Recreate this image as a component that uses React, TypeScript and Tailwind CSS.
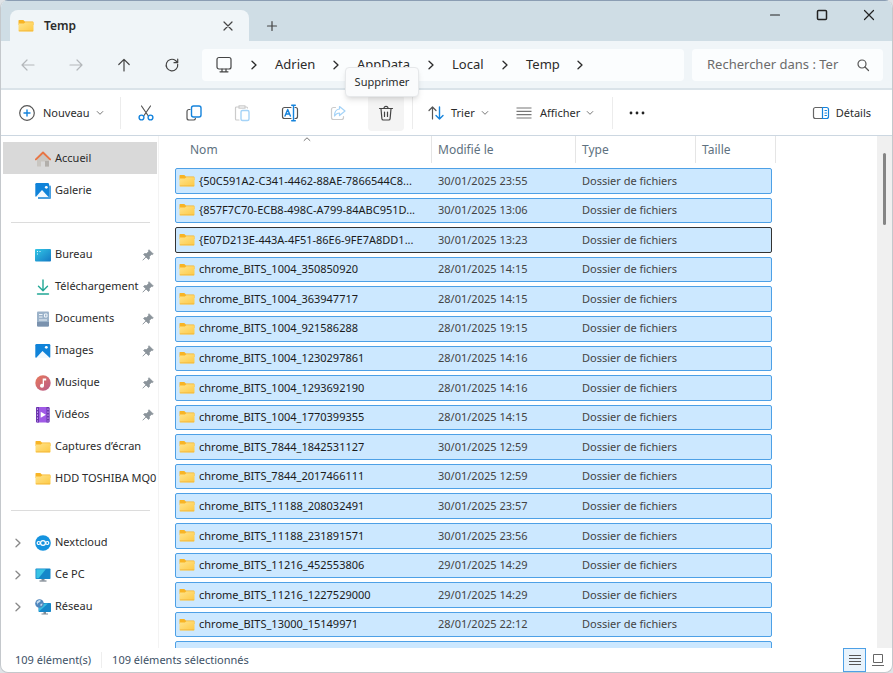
import type { ReactNode } from "react";

type IconProps = { className?: string };

const stroke = { fill: "none", strokeLinecap: "round", strokeLinejoin: "round" } as const;

function FolderIcon({ className = "w-4 h-4" }: IconProps) {
  return (
    <svg viewBox="0 0 16 16" className={`shrink-0 ${className}`} aria-hidden="true">
      <defs>
        <linearGradient id="folder-front" x1="0" y1="0" x2="1" y2="1">
          <stop offset="0" stopColor="#ffe48d" />
          <stop offset="1" stopColor="#fdc944" />
        </linearGradient>
      </defs>
      <path d="M.5 2.6q0-.6.6-.6h4.2l1.6 1.500h7.700q.9 0 .9.9V7H.5z" fill="#f8b425" />
      <path d="M.5 5.400h5.400l1.500-1.200h7.200q.9 0 .9.8v7.500q0 .9-.9.9H1.400q-.9 0-.9-.9z" fill="url(#folder-front)" />
      <path d="M.9 12.800h14.200" stroke="#f3b53a" strokeWidth=".8" />
    </svg>
  );
}

function HomeIcon() {
  return (
    <svg viewBox="0 0 16 16" className="w-4 h-4 shrink-0" aria-hidden="true">
      <path d="M2 7.500 8 2l6 5.500V15q0 .6-.6.6H10v-5H6v5H2.600q-.6 0-.6-.6z" fill="#c9c6c1" />
      <path d="M10 10h4v5q0 .6-.6.6H10z" fill="#b2afab" />
      <path d="M.9 8.400 8 1.500l7.100 6.900" stroke="#e87544" strokeWidth="1.900" {...stroke} />
    </svg>
  );
}

function PictureIcon({ stacked = false }: { stacked?: boolean }) {
  return (
    <svg viewBox="0 0 16 16" className="w-4 h-4 shrink-0" aria-hidden="true">
      {stacked && <path d="M3 2.500h12q1 0 1 1V15q0 1-1 1H3z" fill="#4a9fe0" />}
      <rect x=".3" y={stacked ? 0 : 1} width={stacked ? 13.7 : 15} height="14" rx="1.200" fill="#1083d9" />
      <path d={stacked ? "M.8 14 7 7l6.500 7z" : "M1 15 7.500 8l7.500 7z"} fill="#f2f9ff" />
      <circle cx="11.300" cy="4.300" r="1.400" fill="#fff" />
    </svg>
  );
}

function DesktopIcon() {
  return (
    <svg viewBox="0 0 16 16" className="w-4 h-4 shrink-0" aria-hidden="true">
      <defs>
        <linearGradient id="desktop" x1="0" y1="0" x2="1" y2="1">
          <stop offset="0" stopColor="#32c7e6" />
          <stop offset="1" stopColor="#1479c4" />
        </linearGradient>
      </defs>
      <rect x="0" y="2" width="16" height="12.500" rx="1" fill="url(#desktop)" />
      <path d="M2 4.500h1M2 7h1M4.500 4.500h1" stroke="#e6fbff" />
    </svg>
  );
}

function DownloadIcon() {
  return (
    <svg viewBox="0 0 16 16" className="w-4 h-4 shrink-0" aria-hidden="true">
      <path d="M8 1v10.500M3.500 7.300 8 11.700l4.500-4.400M2.500 15h11" stroke="#21a795" strokeWidth="1.400" {...stroke} />
    </svg>
  );
}

function DocumentIcon() {
  return (
    <svg viewBox="0 0 16 16" className="w-4 h-4 shrink-0" aria-hidden="true">
      <path d="M3 .5h10q1 0 1 1v13q0 1-1 1H3q-1 0-1-1v-13q0-1 1-1z" fill="#9bb2c9" />
      <path d="M2 11h12v3.500q0 1-1 1H3q-1 0-1-1z" fill="#7a92ae" />
      <path d="M4 3.500h3.500M4 6h3.500M4 9h8M9.500 3h2.500v3H9.500z" stroke="#eef4fa" strokeWidth="1" fill="none" />
    </svg>
  );
}

function MusicIcon() {
  return (
    <svg viewBox="0 0 16 16" className="w-4 h-4 shrink-0" aria-hidden="true">
      <defs>
        <linearGradient id="music" x1="0" y1="0" x2="1" y2="1">
          <stop offset="0" stopColor="#e8795a" />
          <stop offset="1" stopColor="#b85b8b" />
        </linearGradient>
      </defs>
      <circle cx="8" cy="8" r="7.700" fill="url(#music)" />
      <path d="M7.700 3.400h3.500v2.200H9v5.200a2 2 0 1 1-1.300-1.900z" fill="#fff" />
    </svg>
  );
}

function VideoIcon() {
  return (
    <svg viewBox="0 0 16 16" className="w-4 h-4 shrink-0" aria-hidden="true">
      <rect x="1" y="0" width="13.500" height="15.500" rx="1.200" fill="#a05ae6" />
      <path d="M1 1.200q0-1.200 1.200-1.200H4v15.500H2.200Q1 15.500 1 14.300zM11.500 0h1.800q1.200 0 1.200 1.200v13.100q0 1.200-1.200 1.200h-1.800z" fill="#6b36ae" />
      <path d="M2.500 1.500v13M13 1.500v13" stroke="#d9bdf8" strokeDasharray="1.300 1.700" />
      <path d="M5.700 4.700v6.100L10.900 7.700z" fill="#fff" />
    </svg>
  );
}

function NextcloudIcon() {
  return (
    <svg viewBox="0 0 16 16" className="w-4 h-4 shrink-0" aria-hidden="true">
      <circle cx="8" cy="8" r="7.800" fill="#1593df" />
      <g fill="none" stroke="#fff" strokeWidth="1.200">
        <circle cx="8" cy="8" r="2.400" />
        <circle cx="3.700" cy="8" r="1.500" />
        <circle cx="12.300" cy="8" r="1.500" />
      </g>
    </svg>
  );
}

function ComputerIcon() {
  return (
    <svg viewBox="0 0 16 16" className="w-4 h-4 shrink-0" aria-hidden="true">
      <rect x=".5" y="1.500" width="15" height="10.500" rx=".8" fill="#1587c9" />
      <path d="M1.300 2.300h9.500L3.500 11.200H1.300z" fill="#39c3e4" />
      <path d="M6.500 12h3v1.500h-3z" fill="#7f8b96" />
      <path d="M4.500 14h7" stroke="#5f6b76" />
    </svg>
  );
}

function NetworkIcon() {
  return (
    <svg viewBox="0 0 16 16" className="w-4 h-4 shrink-0" aria-hidden="true">
      <rect x="3.500" y="4" width="12.500" height="9" rx=".7" fill="#1787c9" />
      <path d="M4 12.500V7l6-2.500h3z" fill="#37bce0" />
      <path d="M8.500 13h2.500v1.500H8.500zM6.500 14.500h6.500v1H6.500z" fill="#7f8b96" />
      <circle cx="4.500" cy="4.500" r="4.300" fill="#4f86bd" />
      <path d="M1.500 3q2-2.500 4-2 .5 2-1.500 2.500T2.500 6zM5.500 5l2-.5-.5 2-1.500.5z" fill="#c4dcef" />
    </svg>
  );
}

function PinIcon() {
  return (
    <svg viewBox="0 0 12 12" className="w-3 h-3 shrink-0" aria-hidden="true">
      <path d="M7 .7 11.300 5l-.9.6-1-.2-2 2 .1 2.100-1 1L3.900 7.900.8 11.200 4.100 8 1.500 5.500l1-1 2.100.1 2-2-.2-1z" fill="#8b949b" stroke="#8b949b" strokeWidth=".7" strokeLinejoin="round" />
    </svg>
  );
}

function ChevronRight({ className = "" }: IconProps) {
  return (
    <svg viewBox="0 0 8 10" className={`w-2 h-2.5 shrink-0 ${className}`} aria-hidden="true">
      <path d="m2 1.200 4 3.800-4 3.800" stroke="currentColor" strokeWidth="1.300" {...stroke} />
    </svg>
  );
}

function ChevronDown() {
  return (
    <svg viewBox="0 0 8 8" className="w-2 h-2 shrink-0 text-[#777]" aria-hidden="true">
      <path d="m1.200 2.500 2.800 2.800 2.800-2.800" stroke="currentColor" strokeWidth="1" {...stroke} />
    </svg>
  );
}

function LineIcon({ children, className = "" }: { children: ReactNode; className?: string }) {
  return (
    <svg viewBox="0 0 18 18" className={`w-[18px] h-[18px] shrink-0 ${className}`} stroke="currentColor" strokeWidth="1.200" {...stroke} aria-hidden="true">
      {children}
    </svg>
  );
}

type Place = { label: string; icon: ReactNode; pinned?: boolean; expandable?: boolean; active?: boolean };

const groups: Place[][] = [
  [
    { label: "Accueil", icon: <HomeIcon />, active: true },
    { label: "Galerie", icon: <PictureIcon stacked /> },
  ],
  [
    { label: "Bureau", icon: <DesktopIcon />, pinned: true },
    { label: "Téléchargement", icon: <DownloadIcon />, pinned: true },
    { label: "Documents", icon: <DocumentIcon />, pinned: true },
    { label: "Images", icon: <PictureIcon />, pinned: true },
    { label: "Musique", icon: <MusicIcon />, pinned: true },
    { label: "Vidéos", icon: <VideoIcon />, pinned: true },
    { label: "Captures d’écran", icon: <FolderIcon /> },
    { label: "HDD TOSHIBA MQ0", icon: <FolderIcon /> },
  ],
  [
    { label: "Nextcloud", icon: <NextcloudIcon />, expandable: true },
    { label: "Ce PC", icon: <ComputerIcon />, expandable: true },
    { label: "Réseau", icon: <NetworkIcon />, expandable: true },
  ],
];

const files: [string, string][] = [
  ["{50C591A2-C341-4462-88AE-7866544C8...", "30/01/2025 23:55"],
  ["{857F7C70-ECB8-498C-A799-84ABC951D...", "30/01/2025 13:06"],
  ["{E07D213E-443A-4F51-86E6-9FE7A8DD1...", "30/01/2025 13:23"],
  ["chrome_BITS_1004_350850920", "28/01/2025 14:15"],
  ["chrome_BITS_1004_363947717", "28/01/2025 14:15"],
  ["chrome_BITS_1004_921586288", "28/01/2025 19:15"],
  ["chrome_BITS_1004_1230297861", "28/01/2025 14:16"],
  ["chrome_BITS_1004_1293692190", "28/01/2025 14:16"],
  ["chrome_BITS_1004_1770399355", "28/01/2025 14:15"],
  ["chrome_BITS_7844_1842531127", "30/01/2025 12:59"],
  ["chrome_BITS_7844_2017466111", "30/01/2025 12:59"],
  ["chrome_BITS_11188_208032491", "30/01/2025 23:57"],
  ["chrome_BITS_11188_231891571", "30/01/2025 23:56"],
  ["chrome_BITS_11216_452553806", "29/01/2025 14:29"],
  ["chrome_BITS_11216_1227529000", "29/01/2025 14:29"],
  ["chrome_BITS_13000_15149971", "28/01/2025 22:12"],
];

const focusedRow = 2;
const columns = "grid grid-cols-[257px_144px_120px_1fr]";

function TitleBar() {
  return (
    <header className="flex h-[41px] shrink-0 items-end border-t border-[#8b9db3] bg-[#cfdde5] pl-[9px]">
      <div className="flex h-[31px] w-[239px] items-center rounded-t-lg bg-[#f0f5f8] pr-3 pl-2">
        <FolderIcon />
        <h1 className="ml-2.5 flex-1 text-[12px] font-semibold">Temp</h1>
        <button aria-label="Fermer l'onglet" className="flex h-6 w-[18px] items-center justify-center text-[#444]">
          <LineIcon><path d="m5 5 8 8m0-8-8 8" /></LineIcon>
        </button>
      </div>
      <button aria-label="Nouvel onglet" className="ml-[14px] flex h-[31px] w-[18px] items-center justify-center text-[#444]">
        <LineIcon><path d="M9 4.500v9M4.500 9h9" /></LineIcon>
      </button>
      <div className="ml-auto flex h-full items-start gap-[29px] pt-[5px] pr-3.5">
        <button aria-label="Réduire"><LineIcon className="text-[#222]"><path d="M4.500 9h9" /></LineIcon></button>
        <button aria-label="Agrandir"><LineIcon className="text-[#222]"><rect x="4.500" y="4.500" width="9" height="9" rx="1" strokeWidth="1.500" /></LineIcon></button>
        <button aria-label="Fermer"><LineIcon className="text-[#222]"><path d="m4.500 4.500 9 9m0-9-9 9" /></LineIcon></button>
      </div>
    </header>
  );
}

function NavBar() {
  return (
    <nav aria-label="Adresse" className="flex h-[49px] shrink-0 items-center border-b-2 border-[#dae3e9] bg-[#f0f5f8] pr-[9px] pl-[3px]">
      <div className="mr-1.5 flex shrink-0">
        <button aria-label="Précédent" className="flex w-12 justify-center text-[#b3b7ba]"><LineIcon><path d="M15 9H3m5-5L3 9l5 5" /></LineIcon></button>
        <button aria-label="Suivant" className="flex w-12 justify-center text-[#b3b7ba]"><LineIcon><path d="M3 9h12m-5-5 5 5-5 5" /></LineIcon></button>
        <button aria-label="Dossier parent" className="flex w-12 justify-center text-[#444]"><LineIcon><path d="M9 15V3.500M3.800 8.500 9 3.300l5.200 5.200" /></LineIcon></button>
        <button aria-label="Actualiser" className="flex w-12 justify-center text-[#444]"><LineIcon><path d="M14.700 8.300A5.800 5.800 0 1 1 12.500 4.500L14.600 6.500M14.700 3v3.700H11" /></LineIcon></button>
      </div>
      <div className="mr-2 flex h-8 min-w-0 flex-1 items-center rounded bg-[#fbfdfe] pl-[13px] text-[13px]">
        <LineIcon className="text-[#444]">
          <rect x="2" y="1.500" width="14" height="11.500" rx="2" />
          <path d="M7 13v2.500m4-2.500v2.500M5 15.800h8" />
        </LineIcon>
        <ChevronRight className="mx-[17px]" />
        <button className="w-12 text-left">Adrien</button>
        <ChevronRight className="mr-[17px] ml-[9px]" />
        <button className="w-[60px] text-left">AppData</button>
        <ChevronRight className="mr-[17px] ml-2.5" />
        <button className="w-[43px] text-left">Local</button>
        <ChevronRight className="mr-[17px] ml-1.5" />
        <button className="w-10 text-left">Temp</button>
        <ChevronRight className="ml-2.5" />
      </div>
      <label className="flex h-8 w-[191px] shrink-0 items-center rounded bg-[#fbfdfe] pr-[11px] pl-[15px]">
        <span className="sr-only">Rechercher dans Temp</span>
        <input type="text" placeholder="Rechercher dans : Ter" className="w-[136px] bg-transparent text-[13px] outline-none placeholder:text-[#6b6b6b]" />
        <LineIcon className="ml-auto text-[#555]"><circle cx="8" cy="8" r="4" /><path d="m11 11 3.500 3.500" /></LineIcon>
      </label>
    </nav>
  );
}

function ToolButton({ label, children, className = "text-[#555]" }: { label: string; children: ReactNode; className?: string }) {
  return (
    <button aria-label={label} className={`flex h-9 w-9 items-center justify-center rounded ${className}`}>
      <LineIcon>{children}</LineIcon>
    </button>
  );
}

function ToolBar() {
  return (
    <div role="toolbar" aria-label="Commandes" className="flex h-[46px] shrink-0 items-center border-b border-[#ccd7e1] bg-white pt-px pr-[21px] pl-[17px] text-[11px]">
      <button className="flex w-[102px] items-center">
        <LineIcon className="text-[#555]"><circle cx="9" cy="9" r="7.300" /><path d="M9 6v6M6 9h6" stroke="#1583dc" strokeWidth="1.400" /></LineIcon>
        <span className="mr-1.5 ml-[7px]">Nouveau</span>
        <ChevronDown />
      </button>
      <div className="mr-[7px] h-8 w-px bg-[#ececec]" />
      <div className="flex gap-3">
        <ToolButton label="Couper">
          <path d="m4.500 2 6.500 9.500M13.500 2 7 11.500" />
          <g stroke="#1583dc" strokeWidth="1.400"><circle cx="4.500" cy="13.500" r="2.400" /><circle cx="13.500" cy="13.500" r="2.400" /></g>
        </ToolButton>
        <ToolButton label="Copier">
          <path d="M5 5.500H4a2 2 0 0 0-2 2V14a2 2 0 0 0 2 2h4.500a2 2 0 0 0 2-1.500" />
          <rect x="6.500" y="2" width="9.500" height="11" rx="2" stroke="#1583dc" strokeWidth="1.400" />
        </ToolButton>
        <ToolButton label="Coller" className="text-[#cbcbcb]">
          <path d="M6 3H3.500a1 1 0 0 0-1 1v11a1 1 0 0 0 1 1H6M12 3h1.500q1 0 1 1M6 1.800h6v2.400H6z" />
          <rect x="8" y="6.500" width="8" height="10" rx="1.500" stroke="#a5d3f7" strokeWidth="1.400" />
        </ToolButton>
        <ToolButton label="Renommer">
          <path d="M10 3.500H3.500a2 2 0 0 0-2 2v7a2 2 0 0 0 2 2H10M14 3.500h.5a2 2 0 0 1 2 2v7a2 2 0 0 1-2 2H14" />
          <path d="m4 12 2.700-6.500L9.400 12M5 10h3.500M12.500 1.500v15M10.700 1.300h3.600M10.700 16.700h3.600" stroke="#1583dc" strokeWidth="1.400" />
        </ToolButton>
        <ToolButton label="Partager" className="text-[#cbcbcb]">
          <path d="M6.500 3.500h-2a2 2 0 0 0-2 2v8a2 2 0 0 0 2 2h8a2 2 0 0 0 2-2v-1" />
          <path d="M10.500 2.500 16 7l-5.500 4.500V9Q7.500 9 5.500 12 5.500 5.500 10.500 5z" stroke="#a5d3f7" />
        </ToolButton>
        <div className="relative">
          <ToolButton label="Supprimer" className="bg-[#f4f4f4] text-[#444]">
            <path d="M2.500 4.500h13M7 4.300a2 2 0 0 1 4 0M4 4.700l.9 10q.1 1.300 1.400 1.300h5.400q1.300 0 1.400-1.300l.9-10M7.500 8v4.500M10.500 8v4.500" />
          </ToolButton>
          <div role="tooltip" className="absolute bottom-[34px] left-1/2 flex h-[30px] w-[74px] -translate-x-[41px] items-center justify-center rounded border border-[#e6e8ea] bg-[#fafbfc] shadow-md">
            Supprimer
          </div>
        </div>
      </div>
      <div className="mr-[14px] ml-2 h-8 w-px bg-[#ececec]" />
      <button className="flex w-[88px] items-center">
        <LineIcon className="text-[#555]"><path d="M5.500 15V3M2 6.500 5.500 3 9 6.500" /><path d="M12.500 3v12M9 11.500l3.500 3.500 3.500-3.500" stroke="#1583dc" strokeWidth="1.400" /></LineIcon>
        <span className="mr-1.5 ml-1.5">Trier</span>
        <ChevronDown />
      </button>
      <button className="flex w-[97px] items-center">
        <LineIcon className="text-[#777]"><path d="M1.500 4h15M1.500 7.300h15M1.500 10.700h15M1.500 14h15" strokeLinecap="butt" /></LineIcon>
        <span className="mr-1.5 ml-[7px]">Afficher</span>
        <ChevronDown />
      </button>
      <div className="mr-[15px] h-8 w-px bg-[#ececec]" />
      <button aria-label="Voir plus">
        <LineIcon className="text-[#222]"><path d="M3 9h.01M9 9h.01M15 9h.01" strokeWidth="2.800" /></LineIcon>
      </button>
      <button className="ml-auto flex items-center gap-1.5">
        <LineIcon className="text-[#666]">
          <path d="M10 3.500H3.500a2 2 0 0 0-2 2v7a2 2 0 0 0 2 2H10" />
          <path d="M10.500 3.500h4a2 2 0 0 1 2 2v7a2 2 0 0 1-2 2h-4zM13 6.500h1.500M13 9h1.500M13 11.500h1.500" stroke="#1583dc" />
        </LineIcon>
        Détails
      </button>
    </div>
  );
}

function SideBar() {
  return (
    <aside className="w-[158px] shrink-0 overflow-hidden border-r border-[#f3f3f3] pt-1.5 pl-0.5 text-[11px]">
      {groups.map((group, index) => (
        <div key={index}>
          {index > 0 && <hr className="mt-4 mr-2 mb-[15px] ml-2 border-[#dcdcdc]" />}
          <ul>
            {group.map((place) => (
              <li key={place.label}>
                <button className={`flex h-8 w-[154px] items-center pt-px pr-[3px] text-left ${place.active ? "bg-[#d9d9d9]" : ""}`}>
                  <span className="flex w-8 shrink-0 justify-center pr-0.5 text-[#888]">{place.expandable && <ChevronRight />}</span>
                  {place.icon}
                  <span className="ml-1 flex-1 whitespace-nowrap">{place.label}</span>
                  {place.pinned && <PinIcon />}
                </button>
              </li>
            ))}
          </ul>
        </div>
      ))}
    </aside>
  );
}

function FileTable() {
  return (
    <table className="ml-4 block text-[11px]">
      <thead className="block text-[12px] text-[#5e7180]">
        <tr className={`${columns} h-[27px] w-[601px] [&>th]:border-r [&>th]:border-[#e5e5e5] [&>th]:text-left [&>th]:font-normal`}>
          <th className="relative flex items-center pl-[15px]">
            Nom
            <svg viewBox="0 0 8 6" className="absolute top-0 left-1/2 h-1.5 w-2" aria-hidden="true">
              <path d="m.8 4.800 3.200-3 3.200 3" fill="none" stroke="#777" />
            </svg>
          </th>
          <th className="flex items-center pl-1.5">Modifié le</th>
          <th className="flex items-center pl-1.5">Type</th>
          <th className="flex items-center pl-1.5">Taille</th>
        </tr>
      </thead>
      <tbody className="mt-[5px] grid h-[499px] w-[597px] auto-rows-fr gap-1">
        {files.map(([name, date], index) => (
          <tr key={name} className={`${columns} items-center rounded-[2px] border bg-[#cce8ff] ${index === focusedRow ? "border-[#333]" : "border-[#4da0e6]"}`}>
            <td className="flex items-center gap-1 pl-[3px]">
              <FolderIcon />
              <span className="whitespace-nowrap text-[#1b1b1b]">{name}</span>
            </td>
            <td className="pl-[5px] text-[#444]">{date}</td>
            <td className="pl-[5px] text-[#444]">Dossier de fichiers</td>
            <td />
          </tr>
        ))}
        <tr className={`${columns} overflow-hidden rounded-[2px] border border-[#4da0e6] bg-[#cce8ff]`}>
          <td className="flex items-center pl-[3px]"><FolderIcon /></td>
        </tr>
      </tbody>
    </table>
  );
}

function StatusBar() {
  return (
    <footer className="flex h-6 shrink-0 items-center pr-[3px] pl-3.5 text-[11px] text-[#3d5166]">
      <span>109 élément(s)</span>
      <span className="ml-2.5 border-l border-[#eee] pl-2.5">109 éléments sélectionnés</span>
      <button aria-label="Détails" className="ml-auto flex h-6 w-[23px] items-center justify-center border border-[#4da0e6] bg-[#e8f3fc]">
        <svg viewBox="0 0 12 12" className="h-3 w-3" stroke="#555" aria-hidden="true"><path d="M0 1.500h12M0 4.500h12M0 7.500h12M0 10.500h12" /></svg>
      </button>
      <button aria-label="Grandes icônes" className="flex h-6 w-[23px] items-center justify-center">
        <svg viewBox="0 0 12 12" className="h-3 w-3" fill="none" stroke="#666" aria-hidden="true"><path d="M1.500.5h9v8h-9zM0 11.500h12" /></svg>
      </button>
    </footer>
  );
}

export default function App() {
  return (
    <div className="h-screen bg-[#dfe3e7] font-['Noto_Sans','Open_Sans',sans-serif] text-[#2b2b2b]">
      <div className="flex h-full flex-col overflow-hidden rounded-lg border-x border-b border-[#c4c8cc] bg-white">
        <TitleBar />
        <NavBar />
        <ToolBar />
        <div className="flex min-h-0 flex-1">
          <SideBar />
          <main className="min-w-0 flex-1 overflow-hidden">
            <FileTable />
          </main>
          <div className="w-[15px] shrink-0 bg-[#f0f0f0] pt-[17px]">
            <div className="ml-1.5 h-[72px] w-[3px] rounded-full bg-[#858585]" />
          </div>
        </div>
        <StatusBar />
      </div>
    </div>
  );
}
